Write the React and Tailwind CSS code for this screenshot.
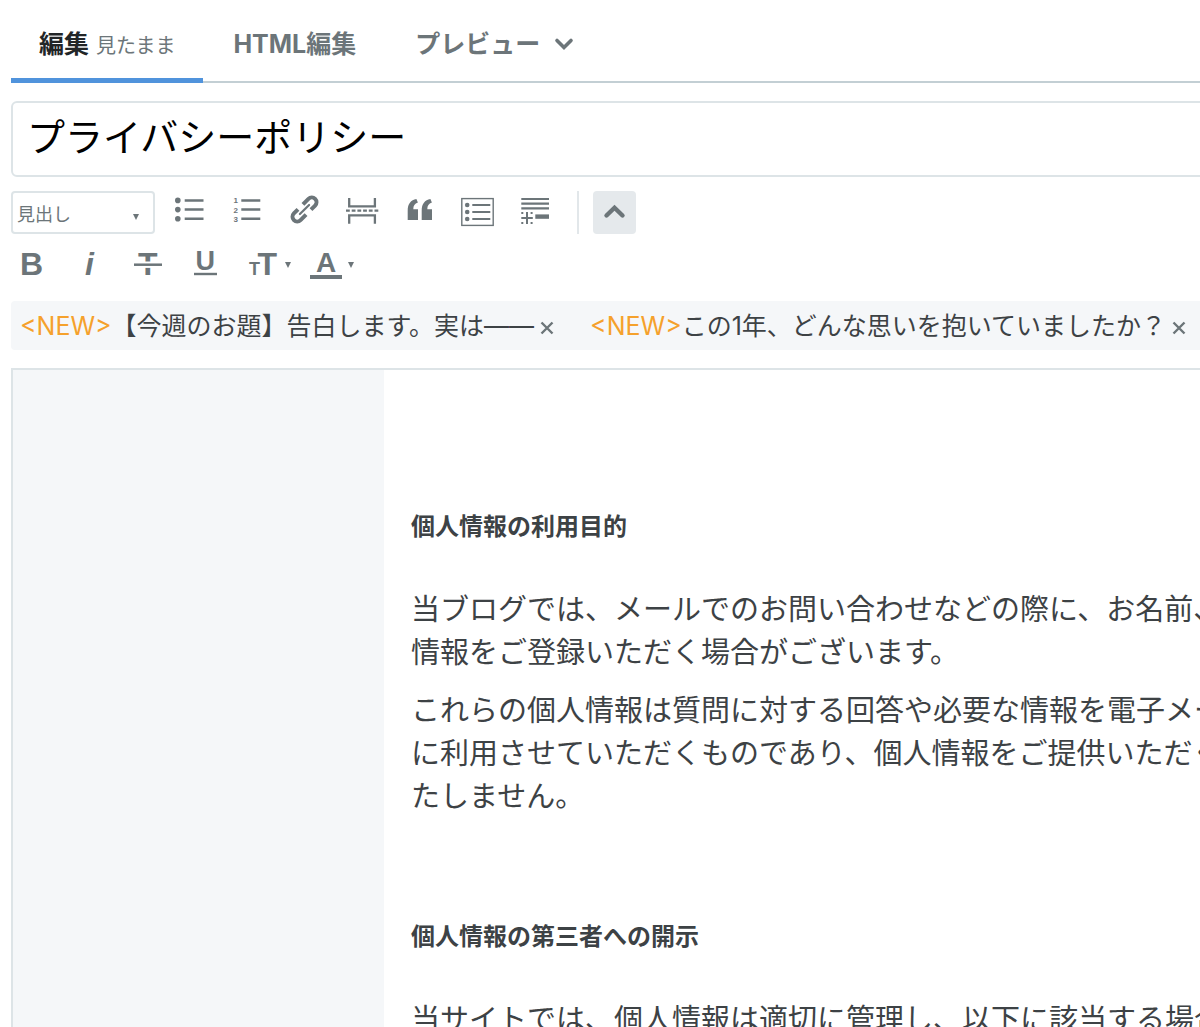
const paragraph = 'whitespace-nowrap text-[29px] leading-[43px]'
const heading = 'whitespace-nowrap text-2xl leading-8 font-bold'

function Caret({ x, y }) {
  return <path d={`M${x} ${y}h6l-3 6z`} fill="currentColor" />
}

function Letter({ x, y, size, children, italic }) {
  return (
    <text
      x={x}
      y={y}
      fontSize={size}
      fontWeight="700"
      fontStyle={italic ? 'italic' : 'normal'}
      fill="currentColor"
      className="font-['Liberation_Sans',sans-serif]"
    >
      {children}
    </text>
  )
}

function ToolButton({ label, children }) {
  return (
    <button type="button" aria-label={label} className="shrink-0 cursor-pointer">
      <svg width="58" height="43" viewBox="0 0 58 43" fill="none" stroke="none" aria-hidden="true">
        {children}
      </svg>
    </button>
  )
}

function InsertTools() {
  return (
    <div className="flex pr-0.5">
      <ToolButton label="箇条書き">
        <g fill="currentColor">
          <circle cx="8.8" cy="9.4" r="2.8" />
          <circle cx="8.8" cy="18.6" r="2.8" />
          <circle cx="8.8" cy="27.8" r="2.8" />
        </g>
        <path d="M15.7 9.4h18.8M15.7 18.6h18.8M15.7 27.8h18.8" stroke="currentColor" strokeWidth="2.5" />
      </ToolButton>
      <ToolButton label="番号付きリスト">
        <Letter x="6.5" y="12.4" size="8">1</Letter>
        <Letter x="6.5" y="21.6" size="8">2</Letter>
        <Letter x="6.5" y="30.6" size="8">3</Letter>
        <path d="M14.3 9.4h19M14.3 18.6h19M14.3 27.8h19" stroke="currentColor" strokeWidth="2.5" />
      </ToolButton>
      <ToolButton label="リンク">
        <g transform="translate(19.5 18.5) rotate(-45)" stroke="currentColor">
          <path d="M2.5 -4.7H10.3A4.7 4.7 0 0 1 10.3 4.7H4.5" strokeWidth="4" />
          <path d="M-2.5 4.7H-10.3A4.7 4.7 0 0 1 -10.3 -4.7H-4.5" strokeWidth="4" />
          <path d="M-6.5 0H6.5" strokeWidth="2.2" strokeLinecap="round" />
        </g>
      </ToolButton>
      <ToolButton label="続きを読む">
        <g stroke="currentColor" strokeWidth="2.3">
          <path d="M6.2 7v8.3h25.7V7M6.2 32.7v-8.4h25.7v8.4" />
          <path d="M3 19.7h33" strokeDasharray="3.8 1.9" />
        </g>
      </ToolButton>
      <ToolButton label="引用">
        <g fill="currentColor">
          <path d="M17 29H6.7V19.5C6.7 13 9.8 9 15.4 8l1.5 3.4c-3.2 1-4.6 3.2-4.6 6.8H17z" />
          <path d="M31 29H20.7V19.5C20.7 13 23.8 9 29.4 8l1.5 3.4c-3.2 1-4.6 3.2-4.6 6.8H31z" />
        </g>
      </ToolButton>
      <ToolButton label="目次">
        <rect x="2.8" y="7.6" width="31.4" height="26.8" stroke="currentColor" strokeWidth="1.4" />
        <g fill="currentColor">
          <circle cx="8.2" cy="14" r="2.3" />
          <circle cx="8.2" cy="21" r="2.3" />
          <circle cx="8.2" cy="28" r="2.3" />
        </g>
        <path d="M13.3 14h18M13.3 21h18M13.3 28h18" stroke="currentColor" strokeWidth="2" />
      </ToolButton>
      <ToolButton label="脚注">
        <g stroke="currentColor">
          <path d="M4.3 8H32M4.3 12.7H32M4.3 17.4H32" strokeWidth="2.2" />
          <path d="M18.3 25.6H32" strokeWidth="4.4" />
          <path d="M10 21v12M4.3 27h11.5" strokeWidth="2" />
          <path d="M4.3 22h2M4.3 32h2M13.6 22h2M13.6 32h2" strokeWidth="2" />
        </g>
      </ToolButton>
    </div>
  )
}

function TextTools() {
  return (
    <div className="mt-[9px] flex">
      <ToolButton label="太字">
        <Letter x="9" y="32" size="32">B</Letter>
      </ToolButton>
      <ToolButton label="斜体">
        <Letter x="16" y="32" size="32" italic>i</Letter>
      </ToolButton>
      <ToolButton label="打ち消し線">
        <Letter x="11" y="32" size="32">T</Letter>
        <path d="M7 21.7h28" stroke="#fff" strokeWidth="6.4" />
        <path d="M7 21.7h28" stroke="currentColor" strokeWidth="2.5" />
      </ToolButton>
      <ToolButton label="下線">
        <Letter x="10.5" y="27" size="27">U</Letter>
        <path d="M9 31h23" stroke="currentColor" strokeWidth="2.4" />
      </ToolButton>
      <ToolButton label="文字サイズ">
        <Letter x="6" y="32" size="18">T</Letter>
        <Letter x="14.5" y="32" size="32">T</Letter>
        <Caret x="42" y="19" />
      </ToolButton>
      <ToolButton label="文字色">
        <Letter x="15" y="29" size="28">A</Letter>
        <path d="M9 34h32" stroke="currentColor" strokeWidth="4" />
        <Caret x="47" y="19" />
      </ToolButton>
    </div>
  )
}

function Suggestion({ children }) {
  return (
    <div className="flex shrink-0 items-center">
      <a href="#topic" className="whitespace-nowrap">
        <span className="text-[#f5a12c]">&lt;NEW&gt;</span>
        {children}
      </a>
      <button type="button" aria-label="閉じる" className="ml-1.5 cursor-pointer pt-0.5 text-[#6c7579]">
        <svg width="14" height="14" viewBox="0 0 14 14" fill="none" stroke="currentColor" strokeWidth="2.4">
          <path d="M1.5 1.5l11 11M12.5 1.5l-11 11" />
        </svg>
      </button>
    </div>
  )
}

export default function App() {
  return (
    <div className="flex h-screen flex-col overflow-hidden bg-white pl-[11px] font-[Inter,'Noto_Sans_CJK_JP',sans-serif] text-[#3d4245]">
      <nav className="flex h-[83px] shrink-0 gap-0.5 border-b-2 border-[#c3cfd4] text-[25px] font-bold whitespace-nowrap text-[#6c7579]">
        <a href="#edit" className="-mb-0.5 flex items-baseline gap-[7px] border-b-5 border-[#5093dc] px-7 pt-6 leading-10 text-[#222527]">
          編集
          <span className="text-xl font-normal text-[#6c7579]">見たまま</span>
        </a>
        <a href="#html" className="px-7 pt-6 leading-10">
          HTML編集
        </a>
        <button type="button" className="flex cursor-pointer items-start px-[29px] pt-6 leading-10">
          プレビュー
          <svg className="mt-3 ml-3.5" width="20" height="16" viewBox="0 0 20 16" fill="none" stroke="currentColor" strokeWidth="3.6">
            <path d="M3 4.5l7 7 7-7" strokeLinecap="round" />
          </svg>
        </button>
      </nav>

      <input
        type="text"
        aria-label="タイトル"
        defaultValue="プライバシーポリシー"
        className="mt-[18px] -mr-2 h-[76px] shrink-0 rounded-md border-2 border-[#dde4e7] px-3.5 pb-2.5 text-[38px] text-black outline-none"
      />

      <div className="mt-3.5 shrink-0 text-[#6c7579]">
        <div className="flex">
          <div className="relative mr-3.5 h-[43px] w-36 shrink-0">
            <select
              aria-label="見出し"
              className="h-full w-full appearance-none rounded-sm border-2 border-[#dde4e7] bg-white px-1 pt-1 text-lg outline-none"
            >
              <option>見出し</option>
            </select>
            <svg className="pointer-events-none absolute right-4 bottom-3.5" width="6" height="6" viewBox="0 0 6 6">
              <Caret x="0" y="0" />
            </svg>
          </div>
          <InsertTools />
          <div className="w-0.5 bg-[#e2e7ea]" />
          <button type="button" aria-label="ツールバーを閉じる" className="ml-3.5 cursor-pointer rounded-sm bg-[#e5e9ec]">
            <svg width="43" height="43" viewBox="0 0 43 43" fill="none" stroke="currentColor" strokeWidth="4.4">
              <path d="M13.5 24.5l8-7.8 8 7.8" strokeLinecap="round" />
            </svg>
          </button>
        </div>
        <TextTools />
      </div>

      <div className="mt-[15px] flex h-[49px] shrink-0 items-center gap-9 rounded-l-sm bg-[#f5f7f9] pt-0.5 pl-[9px] text-[25px]">
        <Suggestion>【今週のお題】告白します。実は――</Suggestion>
        <Suggestion>この1年、どんな思いを抱いていましたか？</Suggestion>
      </div>

      <main className="mt-[18px] flex min-h-0 flex-1 border-t-2 border-l-2 border-[#dde4e7] bg-[#f5f7f9]">
        <div className="w-[371px] shrink-0" />
        <article className="min-w-0 flex-1 overflow-hidden bg-white pt-[141px] pl-[27px]">
          <h4 className={heading}>個人情報の利用目的</h4>
          <p className={`mt-[45px] ${paragraph}`}>
            当ブログでは、メールでのお問い合わせなどの際に、お名前、
            <br />
            情報をご登録いただく場合がございます。
          </p>
          <p className={`mt-[15px] ${paragraph}`}>
            これらの個人情報は質問に対する回答や必要な情報を電子メー
            <br />
            に利用させていただくものであり、個人情報をご提供いただく
            <br />
            たしません。
          </p>
          <h4 className={`mt-[103px] ${heading}`}>個人情報の第三者への開示</h4>
          <p className={`mt-[45px] ${paragraph}`}>当サイトでは、個人情報は適切に管理し、以下に該当する場合</p>
        </article>
      </main>
    </div>
  )
}
